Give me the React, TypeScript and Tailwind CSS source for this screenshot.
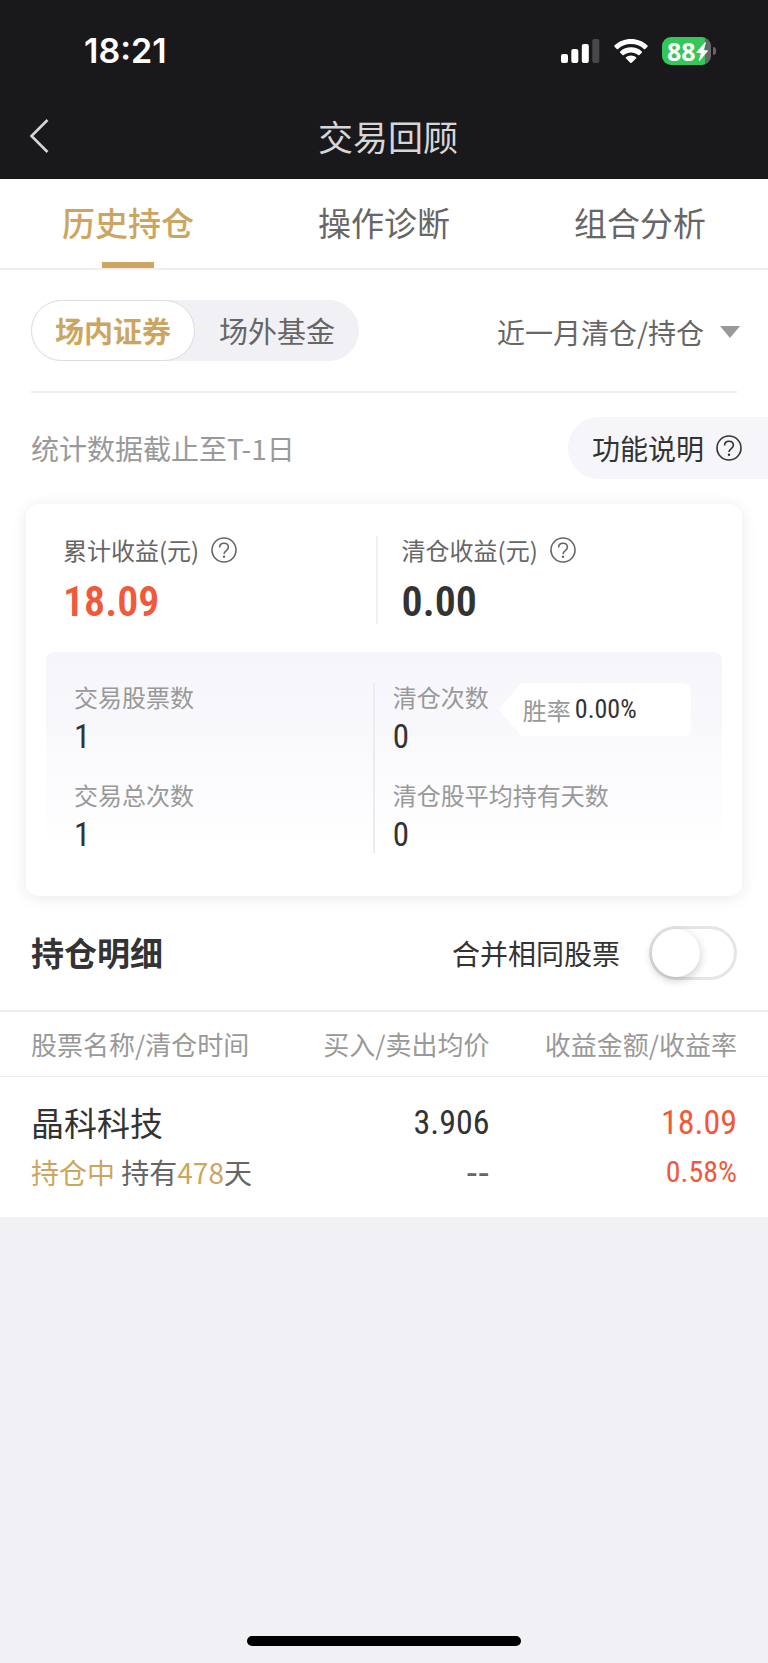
import React, { useState } from 'react';
import clsx from 'clsx';

const TABS = ['历史持仓', '操作诊断', '组合分析'];
const MARKETS = ['场内证券', '场外基金'];
const PERIODS = ['近一月清仓/持仓', '近三月清仓/持仓', '近一年清仓/持仓'];

const HOLDINGS = [
  { name: '晶科科技', status: '持仓中', days: 478, buy: '3.906', sell: '--', profit: '18.09', rate: '0.58%' },
];

const NUM = "font-['Roboto_Condensed','Liberation_Sans_Narrow',Roboto,sans-serif]";

function HelpIcon() {
  return (
    <svg viewBox="0 0 26 26" className="w-[26px] h-[26px] shrink-0" fill="none" stroke="currentColor" aria-hidden="true">
      <circle cx="13" cy="13" r="12" strokeWidth="1.6" />
      <path d="M8.6 10.600C8.600 8 10.500 6.300 13 6.300s4.400 1.600 4.400 4c0 3.300-4.400 3.300-4.400 6.800" strokeWidth="1.6" />
      <circle cx="13" cy="19.800" r="1.200" fill="currentColor" stroke="none" />
    </svg>
  );
}

function StatusBar() {
  return (
    <div className="flex h-[102px] items-center justify-between pl-[84px] pr-[52px]">
      <span className="font-[Inter,sans-serif] text-[34px] leading-none font-semibold text-white">18:21</span>
      <div className="flex items-center gap-[14px]">
        <svg viewBox="0 0 39 24" className="w-[39px] h-6" fill="#fff" aria-hidden="true">
          <rect x="0" y="15" width="7" height="9" rx="2" />
          <rect x="10.3" y="10" width="7" height="14" rx="2" />
          <rect x="20.8" y="5" width="7" height="19" rx="2" />
          <rect x="31.3" y="0" width="7" height="24" rx="2" fill="#48484a" />
        </svg>
        <svg viewBox="0 0 34 24" className="w-[34px] h-6" fill="#fff" aria-hidden="true">
          <path d="M17 0C10.600 0 4.800 2.400.5 6.400c-.4.4-.4.9 0 1.300l2.300 2.300c.4.4.9.4 1.300 0C7.500 6.900 12 5.100 17 5.100s9.500 1.800 12.900 4.900c.4.4.9.4 1.300 0l2.300-2.300c.4-.4.4-.9 0-1.300C29.200 2.400 23.400 0 17 0z" />
          <path d="M17 8.300c-4.100 0-7.900 1.500-10.800 4.100-.4.4-.4.9 0 1.300l2.400 2.400c.3.300.8.400 1.200 0 2-1.700 4.500-2.700 7.200-2.700s5.200 1 7.200 2.700c.4.400.9.300 1.200 0l2.400-2.400c.4-.4.4-.9 0-1.300-2.900-2.600-6.700-4.100-10.800-4.100z" />
          <path d="M17 16.500c-2 0-3.700.7-5 1.800-.4.400-.4.900 0 1.300l4.300 4.100c.4.400 1 .4 1.400 0l4.300-4.100c.4-.4.4-.9 0-1.300-1.300-1.100-3-1.800-5-1.800z" />
        </svg>
        <div className="flex items-center gap-[2px]">
          <div className="flex h-7 w-[49px] items-center rounded-[9px] bg-linear-to-r from-[#34c759] from-88% to-[#65656a] to-88% pl-[5px]">
            <span className="font-['Open_Sans',sans-serif] text-[25px] leading-[24px] font-bold text-white">88</span>
            <svg viewBox="0 0 12 19" className="w-3 h-[19px] shrink-0" fill="#fff" aria-hidden="true">
              <path d="M8.900.5.600 9.900c-.4.5-.1 1.100.5 1.100h3.900L2.900 18c-.2.700.5 1.100 1 .6l7.800-9.300c.4-.5.1-1.100-.5-1.100H7.600L9.900 1.100c.2-.7-.5-1.100-1-.6z" />
            </svg>
          </div>
          <div className="h-2 w-[3px] rounded-r-full bg-[#65656a]" />
        </div>
      </div>
    </div>
  );
}

function Stat({ label, value }: { label: string; value: string }) {
  return (
    <div>
      <dt className="text-[24px] leading-[28px] text-[#999]">{label}</dt>
      <dd className={clsx(NUM, 'mt-2 text-[33px] leading-[36px] font-[450]')}>{value}</dd>
    </div>
  );
}

export default function App() {
  const [tab, setTab] = useState(0);
  const [market, setMarket] = useState(0);
  const [merge, setMerge] = useState(false);

  return (
    <div className="flex min-h-screen flex-col bg-[#f0f0f5] font-['Noto_Sans_CJK_SC',sans-serif] text-[#333]">
      <header className="bg-[#19191b]">
        <StatusBar />
        <div className="grid h-[77px] grid-cols-[80px_1fr_72px] items-center pb-[10px]">
          <button aria-label="返回" className="flex h-full items-center pl-[29px] text-[#d6d6d8]">
            <svg viewBox="0 0 20 34" className="w-5 h-[34px]" fill="none" stroke="currentColor" strokeWidth="2.6" aria-hidden="true">
              <path d="M18.500 1 2.500 17l16 16" />
            </svg>
          </button>
          <h1 className="text-center text-[35px] leading-none text-[#d6d6d8]">交易回顾</h1>
        </div>
      </header>

      <main className="bg-white">
        {/* Tabs */}
        <nav className="grid h-[91px] grid-cols-3 border-b-2 border-[#eeeeef]">
          {TABS.map((t, i) => (
            <button
              key={t}
              onClick={() => setTab(i)}
              className={clsx(
                'flex flex-col items-center justify-between pt-5 text-[33px] leading-[46px]',
                tab === i ? 'font-medium text-[#cca560]' : 'text-[#666]'
              )}
            >
              {t}
              {tab === i && <span className="h-[6px] w-[52px] bg-[#cca560]" />}
            </button>
          ))}
        </nav>

        {/* Filters */}
        <div className="mx-[31px] flex h-[123px] items-center justify-between border-b-2 border-[#eeeeef]">
          <div className="flex rounded-full bg-[#f0f0f5]">
            {MARKETS.map((m, i) => (
              <button
                key={m}
                onClick={() => setMarket(i)}
                className={clsx(
                  'h-[61px] w-[164px] rounded-full border text-[29px]',
                  market === i ? 'border-[#ddd] bg-white font-bold text-[#cca560]' : 'border-transparent text-[#666]'
                )}
              >
                {m}
              </button>
            ))}
          </div>
          <label className="-mr-[3px] flex items-center gap-4 pt-[2px]">
            <select aria-label="时间范围" className="appearance-none bg-transparent text-[28px] text-[#666] outline-none">
              {PERIODS.map(p => <option key={p}>{p}</option>)}
            </select>
            <svg viewBox="0 0 20 12" className="w-5 h-3" fill="#999" aria-hidden="true">
              <path d="M0 0h20L10 12z" />
            </svg>
          </label>
        </div>

        <div className="flex items-center justify-between pt-6 pb-[25px] pl-[31px]">
          <p className="text-[28px] text-[#999]">统计数据截止至T-1日</p>
          <button className="flex h-[62px] items-center gap-3 rounded-l-full bg-[#f5f5fa] pr-[26px] pl-6 text-[28px]">
            功能说明
            <HelpIcon />
          </button>
        </div>

        {/* Summary card */}
        <section className="mx-[26px] h-[392px] rounded-xl bg-white px-5 pt-8 shadow-[0_2px_16px_rgba(0,0,0,0.09)]">
          <dl className="grid grid-cols-[49%_51%] px-[17px]">
            <div className="border-r-2 border-[#f0f0f0]">
              <dt className="flex h-7 items-center gap-3 text-[24px] text-[#666]">累计收益(元)<HelpIcon /></dt>
              <dd className={clsx(NUM, 'mt-3 h-12 text-[42px] leading-[52px] font-semibold text-[#f1593b]')}>18.09</dd>
            </div>
            <div className="pl-6">
              <dt className="flex h-7 items-center gap-3 text-[24px] text-[#666]">清仓收益(元)<HelpIcon /></dt>
              <dd className={clsx(NUM, 'mt-3 h-12 text-[42px] leading-[52px] font-semibold')}>0.00</dd>
            </div>
          </dl>

          <div className="mt-7 grid grid-cols-[13fr_15fr] rounded-t-lg bg-linear-to-b from-[#f5f5fb] to-white pt-[31px] pl-7">
            <dl className="grid gap-[26px] border-r-2 border-[#ececef]">
              <Stat label="交易股票数" value="1" />
              <Stat label="交易总次数" value="1" />
            </dl>
            <dl className="grid gap-[26px] pl-[18px]">
              <div className="flex h-[72px] items-start gap-[10px]">
                <Stat label="清仓次数" value="0" />
                <div className="flex h-[53px]">
                  <svg viewBox="0 0 24 53" className="h-[53px] w-6" fill="#fff" aria-hidden="true">
                    <path d="M24 0q-1.500.2-3 1.700L1.500 24q-2 2.500 0 5L21 51.300q1.500 1.500 3 1.700z" />
                  </svg>
                  <div className="flex w-[168px] items-center gap-1 rounded-r-lg bg-white text-[24px] whitespace-nowrap text-[#999]">
                    胜率
                    <span className={clsx(NUM, 'text-[26px] font-[450] text-[#333]')}>0.00%</span>
                  </div>
                </div>
              </div>
              <Stat label="清仓股平均持有天数" value="0" />
            </dl>
          </div>
        </section>

        {/* Holdings */}
        <section>
          <div className="flex h-[116px] items-center justify-between border-b-2 border-[#eeeeef] px-[31px]">
            <h2 className="text-[33px] font-bold">持仓明细</h2>
            <label className="flex items-center gap-[29px] text-[28px]">
              合并相同股票
              <input
                type="checkbox"
                role="switch"
                checked={merge}
                onChange={e => setMerge(e.target.checked)}
                className="h-[54px] w-[88px] appearance-none rounded-full border-3 border-[#e5e5e5] bg-white before:block before:h-12 before:w-12 before:rounded-full before:bg-white before:shadow-[0_3px_10px_rgba(0,0,0,0.22)] checked:border-[#cca560] checked:bg-[#cca560] checked:before:ml-[34px]"
              />
            </label>
          </div>

          <table className="w-full table-fixed">
            <thead>
              <tr className="h-[64px] border-b border-[#eeeeef] text-[26px] text-[#999]">
                <th className="w-[38%] pl-[31px] text-left font-normal">股票名称/清仓时间</th>
                <th className="w-[26%] pr-[2px] text-right font-normal">买入/卖出均价</th>
                <th className="pr-[31px] text-right font-normal">收益金额/收益率</th>
              </tr>
            </thead>
            <tbody>
              {HOLDINGS.map(h => (
                <tr key={h.name} className="h-[141px]">
                  <td className="pl-[31px]">
                    <div className="text-[33px] leading-[50px]">{h.name}</div>
                    <div className="text-[28px] leading-[50px] text-[#666]">
                      <span className="text-[#cca560]">{h.status}</span> 持有
                      <span className="text-[#cca560]">{h.days}</span>天
                    </div>
                  </td>
                  <td className="pr-[2px] text-right">
                    <div className={clsx(NUM, 'text-[34px] leading-[50px] font-[450]')}>{h.buy}</div>
                    <div className="pb-1 text-[33px] leading-[46px] font-medium text-[#666]">{h.sell}</div>
                  </td>
                  <td className={clsx(NUM, 'pr-[31px] text-right font-[450] text-[#f1593b]')}>
                    <div className="text-[34px] leading-[50px]">{h.profit}</div>
                    <div className="text-[30px] leading-[50px]">{h.rate}</div>
                  </td>
                </tr>
              ))}
            </tbody>
          </table>
        </section>
      </main>

      <div className="mx-auto mt-auto mb-[17px] h-[10px] w-[274px] rounded-full bg-black" />
    </div>
  );
}
